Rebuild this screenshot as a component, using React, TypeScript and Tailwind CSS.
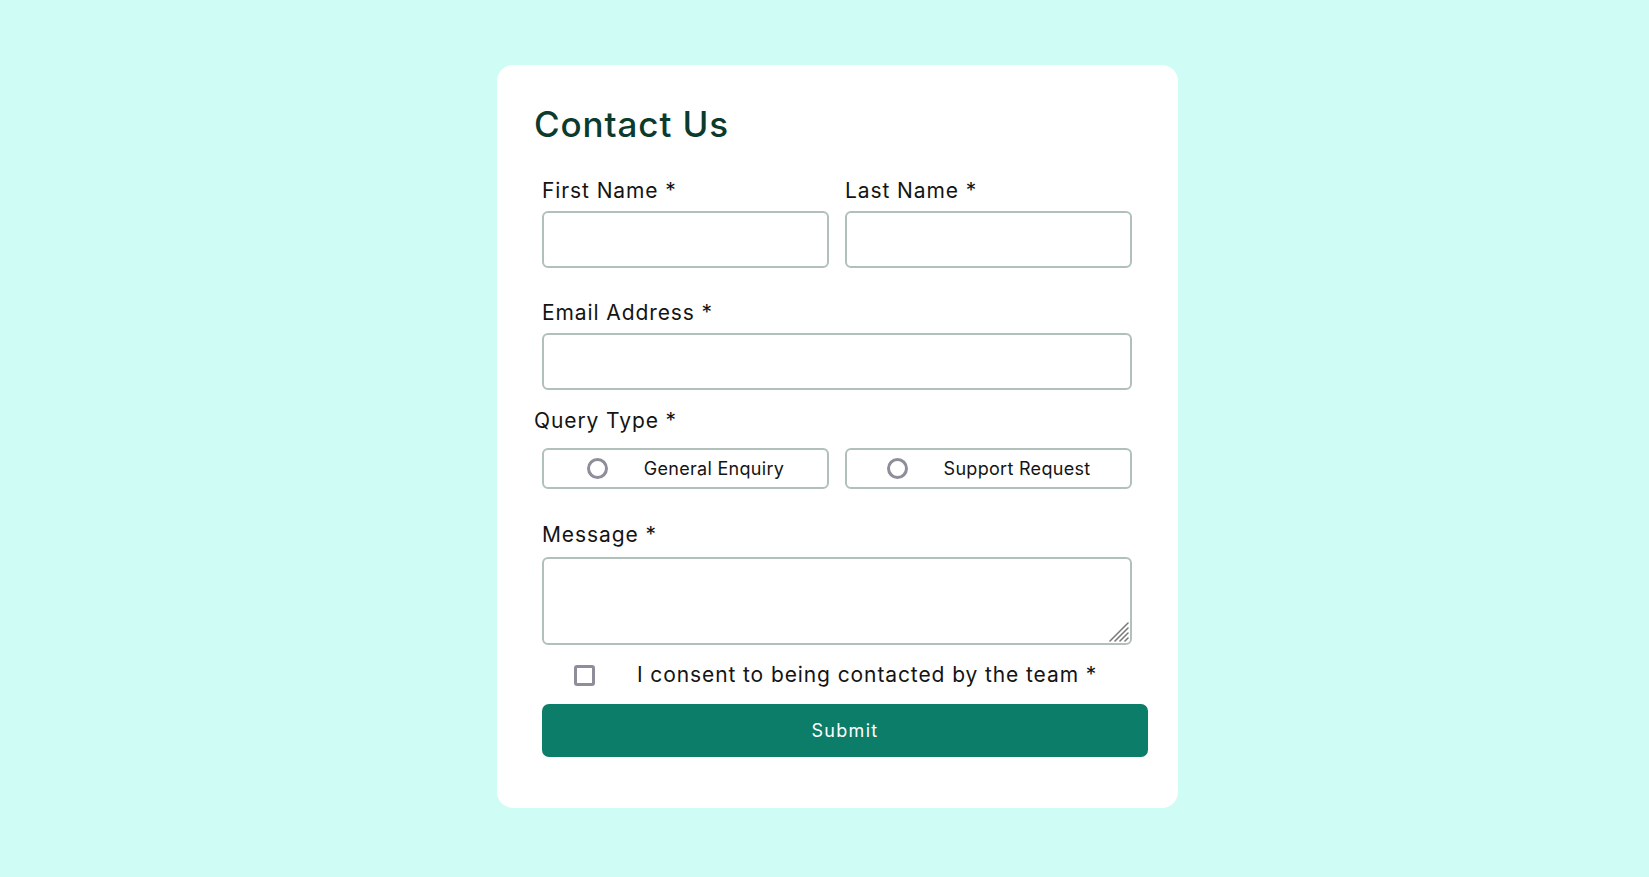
import React from "react";

const font = { fontFamily: "Inter, 'Noto Sans', sans-serif" };

function Label({ children }: { children: React.ReactNode }) {
  return <div className="text-[21px] leading-[24px] tracking-[0.9px] text-[#141414]">{children}</div>;
}

function Radio({ label }: { label: string }) {
  return (
    <label className="flex-1 h-[41px] flex items-center justify-center gap-[36px] border-2 border-[#b2c0bc] rounded-[6px] bg-white">
      <span className="w-[21px] h-[21px] rounded-full border-[3px] border-[#908d9b]" />
      <span className="text-[18px] leading-[22px] tracking-[0.3px] text-[#141414]">{label}</span>
    </label>
  );
}

export default function App() {
  return (
    <div className="min-h-[877px] w-full bg-[#cffcf4] flex justify-center pl-[26px] pt-[65px]" style={font}>
      <div className="w-[681px] h-[743px] bg-white rounded-[16px] pl-[37px] pt-[39px]">
        <h1 className="text-[35px] leading-[40px] font-medium tracking-[0.9px] text-[#0b3b2e]">Contact Us</h1>
        <div className="ml-[8px] w-[590px]">
          <div className="mt-[35px] flex gap-[16px]">
            <div className="flex-1">
              <Label>First Name *</Label>
              <div className="mt-[8px] h-[57px] border-2 border-[#b2c0bc] rounded-[6px]" />
            </div>
            <div className="flex-1">
              <Label>Last Name *</Label>
              <div className="mt-[8px] h-[57px] border-2 border-[#b2c0bc] rounded-[6px]" />
            </div>
          </div>
          <div className="mt-[33px]">
            <Label>Email Address *</Label>
            <div className="mt-[8px] h-[57px] border-2 border-[#b2c0bc] rounded-[6px]" />
          </div>
        </div>
        <div className="mt-[19px]">
          <Label>Query Type *</Label>
        </div>
        <div className="ml-[8px] w-[590px] mt-[15px] flex gap-[16px]">
          <Radio label="General Enquiry" />
          <Radio label="Support Request" />
        </div>
        <div className="ml-[8px] w-[590px] mt-[34px]">
          <Label>Message *</Label>
          <div className="relative mt-[10px]">
            <textarea className="block w-full h-[88px] border-2 border-[#b2c0bc] rounded-[6px] resize-none outline-none" />
            <svg className="absolute right-[3px] bottom-[3px]" width="22" height="22" viewBox="0 0 22 22">
              <g stroke="#7a7a7a" strokeWidth="1.6" strokeLinecap="round">
                <line x1="21" y1="3" x2="3" y2="21" />
                <line x1="21" y1="8" x2="8" y2="21" />
                <line x1="21" y1="13" x2="13" y2="21" />
                <line x1="21" y1="18" x2="18" y2="21" />
              </g>
            </svg>
          </div>
        </div>
        <div className="ml-[40px] mt-[18px] h-[24px] flex items-center">
          <span className="w-[21px] h-[21px] rounded-[3px] border-[3px] border-[#908d9b]" />
          <span className="ml-[42px] text-[21px] leading-[24px] tracking-[0.9px] text-[#141414]">I consent to being contacted by the team *</span>
        </div>
        <button className="ml-[8px] mt-[17px] w-[606px] h-[53px] rounded-[7px] bg-[#0c7d69] text-white text-[18px] leading-[22px] tracking-[1.3px]">
          Submit
        </button>
      </div>
    </div>
  );
}
